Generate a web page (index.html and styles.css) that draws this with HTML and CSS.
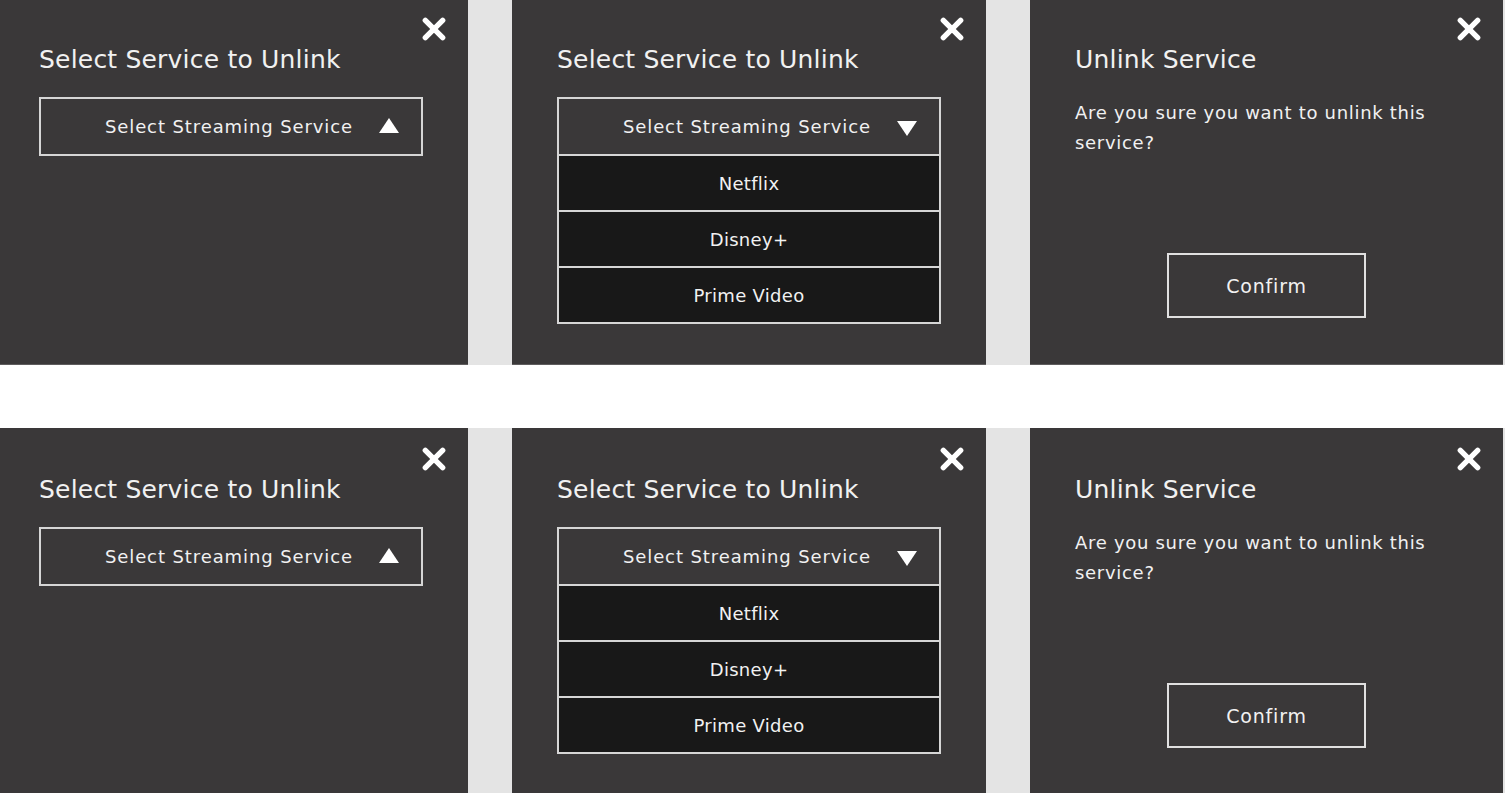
FILE: index.html
```html
<!DOCTYPE html>
<html lang="en">
<head>
    <meta charset="UTF-8">
    <title>Unlink Service</title>
    <link rel="stylesheet" href="styles.css">
</head>

<body>
    <div class="board">
        <div class="strip">
            <div class="panel first">
                <button class="close-btn" aria-label="Close">
                    <svg viewBox="0 0 24 24" width="24" height="24"><path d="M4 4 L20 20 M20 4 L4 20" /></svg>
                </button>
                <h2 class="panel-title">Select Service to Unlink</h2>
                <div class="select">
                    <div class="select-head">
                        <span>Select Streaming Service</span>
                        <span class="caret up"></span>
                    </div>
                </div>
            </div>

            <div class="panel">
                <button class="close-btn" aria-label="Close">
                    <svg viewBox="0 0 24 24" width="24" height="24"><path d="M4 4 L20 20 M20 4 L4 20" /></svg>
                </button>
                <h2 class="panel-title">Select Service to Unlink</h2>
                <div class="select open">
                    <div class="select-head">
                        <span>Select Streaming Service</span>
                        <span class="caret down"></span>
                    </div>
                    <div class="option">Netflix</div>
                    <div class="option">Disney+</div>
                    <div class="option">Prime Video</div>
                </div>
            </div>

            <div class="panel last">
                <button class="close-btn" aria-label="Close">
                    <svg viewBox="0 0 24 24" width="24" height="24"><path d="M4 4 L20 20 M20 4 L4 20" /></svg>
                </button>
                <h2 class="panel-title">Unlink Service</h2>
                <p class="panel-text">Are you sure you want to unlink this service?</p>
                <div class="actions">
                    <button class="confirm-btn">Confirm</button>
                </div>
            </div>
        </div>

        <div class="strip lower">
            <div class="panel first">
                <button class="close-btn" aria-label="Close">
                    <svg viewBox="0 0 24 24" width="24" height="24"><path d="M4 4 L20 20 M20 4 L4 20" /></svg>
                </button>
                <h2 class="panel-title">Select Service to Unlink</h2>
                <div class="select">
                    <div class="select-head">
                        <span>Select Streaming Service</span>
                        <span class="caret up"></span>
                    </div>
                </div>
            </div>

            <div class="panel">
                <button class="close-btn" aria-label="Close">
                    <svg viewBox="0 0 24 24" width="24" height="24"><path d="M4 4 L20 20 M20 4 L4 20" /></svg>
                </button>
                <h2 class="panel-title">Select Service to Unlink</h2>
                <div class="select open">
                    <div class="select-head">
                        <span>Select Streaming Service</span>
                        <span class="caret down"></span>
                    </div>
                    <div class="option">Netflix</div>
                    <div class="option">Disney+</div>
                    <div class="option">Prime Video</div>
                </div>
            </div>

            <div class="panel last">
                <button class="close-btn" aria-label="Close">
                    <svg viewBox="0 0 24 24" width="24" height="24"><path d="M4 4 L20 20 M20 4 L4 20" /></svg>
                </button>
                <h2 class="panel-title">Unlink Service</h2>
                <p class="panel-text">Are you sure you want to unlink this service?</p>
                <div class="actions">
                    <button class="confirm-btn">Confirm</button>
                </div>
            </div>
        </div>
    </div>
</body>
</html>
```

FILE: styles.css
```css
body {
    font-family: "DejaVu Sans", Arial, sans-serif;
    background: #fff;
    margin: 0;
    padding: 0;
    overflow: hidden;
}

.board {
    display: flex;
    flex-direction: column;
    gap: 63px;
    width: 1505px;
}

.strip {
    display: grid;
    grid-template-columns: 468px 474px 473px;
    column-gap: 44px;
    height: 365px;
    background: #e4e4e4;
}

.panel {
    position: relative;
    background: #3a3839;
    border-bottom: 1px solid #5e5c5d;
    padding: 42px 45px 0 45px;
    color: #f1f1f1;
    box-sizing: border-box;
}

.panel.first {
    padding-left: 39px;
}

.strip.lower .panel {
    padding-top: 44px;
    border-bottom: none;
}

.close-btn {
    position: absolute;
    top: 16px;
    right: 21px;
    width: 26px;
    height: 26px;
    padding: 0;
    border: none;
    background: none;
    cursor: pointer;
}

.strip.lower .close-btn {
    top: 18px;
}

.close-btn svg {
    display: block;
    width: 26px;
    height: 26px;
}

.close-btn path {
    stroke: #fff;
    stroke-width: 5;
    stroke-linecap: round;
    fill: none;
}

.panel-title {
    margin: 0;
    font-size: 25px;
    font-weight: normal;
    line-height: 36px;
    letter-spacing: 0.2px;
}

.select {
    width: 384px;
    margin-top: 19px;
    box-sizing: border-box;
}

.select-head {
    display: flex;
    align-items: center;
    justify-content: flex-end;
    gap: 26px;
    height: 59px;
    padding-right: 22px;
    border: 2px solid #d6d6d6;
    box-sizing: border-box;
    font-size: 18px;
    letter-spacing: 0.9px;
}

.caret {
    width: 0;
    height: 0;
    border-left: 10px solid transparent;
    border-right: 10px solid transparent;
}

.caret.up {
    border-bottom: 15px solid #fff;
    margin-top: -2px;
}

.caret.down {
    border-top: 15px solid #fff;
    margin-top: 4px;
}

.option {
    display: flex;
    align-items: center;
    justify-content: center;
    height: 56px;
    background: #181818;
    border: 2px solid #d6d6d6;
    border-top: none;
    box-sizing: border-box;
    font-size: 18px;
    letter-spacing: 0.3px;
}

.panel-text {
    margin: 20px 0 0 0;
    font-size: 18px;
    line-height: 30px;
    letter-spacing: 0.7px;
    max-width: 390px;
}

.actions {
    display: flex;
    justify-content: center;
    margin-top: 95px;
}

.confirm-btn {
    width: 199px;
    height: 65px;
    background: transparent;
    border: 2px solid #e0e0e0;
    color: #f1f1f1;
    font-family: inherit;
    font-size: 19px;
    letter-spacing: 0.8px;
    cursor: pointer;
}
```
